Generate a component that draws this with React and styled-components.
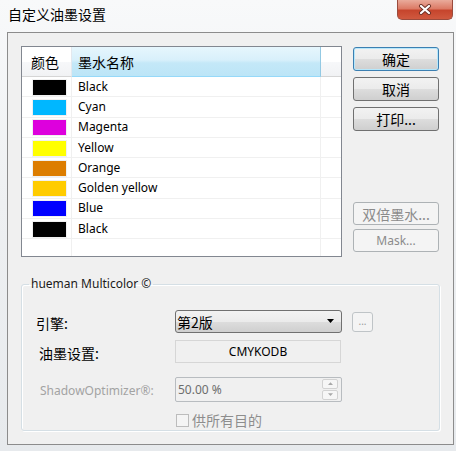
import React from 'react';
import styled, { createGlobalStyle, css } from 'styled-components';

const GlobalStyle = createGlobalStyle`
  html, body {
    margin: 0;
    padding: 0;
  }
  body {
    font-family: "Noto Sans", "Noto Sans CJK SC", sans-serif;
    font-size: 12px;
    color: #000;
    background: #fff;
  }
`

const cjk = css`
  font-family: "Noto Sans CJK SC", "Noto Sans", sans-serif;
  font-size: 14px;
`

const Window = styled.div`
  width: 456px;
  height: 451px;
  box-sizing: border-box;
  display: flex;
  flex-direction: column;
  overflow: hidden;
  background: linear-gradient(180deg, #f8f9fa 0%, #eef0f2 45%, #e7eaed 100%);
`

const TitleBar = styled.div`
  height: 32px;
  flex: none;
  display: flex;
  align-items: flex-start;
  justify-content: space-between;
  padding: 0 3px 0 8px;
`

const Title = styled.div`
  ${cjk};
  margin-top: 5px;
  line-height: 18px;
`

const CloseButton = styled.div`
  width: 56px;
  height: 20px;
  box-sizing: border-box;
  border: 1px solid #9a4b3d;
  border-top: none;
  border-radius: 0 0 5px 5px;
  background: linear-gradient(180deg, #e9ab9b 0%, #dc7b66 45%, #c6452d 55%, #d0593f 100%);
  display: flex;
  align-items: center;
  justify-content: center;
`

const Client = styled.div`
  flex: 1;
  margin: 0 2px 6px 7px;
  border: 1px solid #8c8c8c;
  background: #f0f0f0;
  padding: 13px 12px 0 13px;
  display: flex;
  flex-direction: column;
`

const TopSection = styled.div`
  display: flex;
  align-items: flex-start;
`

const InkList = styled.div`
  width: 321px;
  height: 211px;
  box-sizing: border-box;
  border: 1px solid #828790;
  background: #fff;
  display: flex;
  flex-direction: column;
`

const HeaderRow = styled.div`
  height: 30px;
  flex: none;
  display: flex;
`

const HeaderCell = styled.div`
  ${cjk};
  box-sizing: border-box;
  display: flex;
  align-items: center;
  padding-left: ${p => p.$pad || 0}px;
  width: ${p => (p.$w ? `${p.$w}px` : 'auto')};
  flex: ${p => (p.$w ? 'none' : '1')};
  border-bottom: 1px solid #d5d5d5;
  border-right: 1px solid #e3e8ee;
  background: linear-gradient(180deg, #ffffff 0%, #ffffff 50%, #f7f8fa 51%, #f1f2f4 100%);
  ${p => p.$sorted && css`
    background: linear-gradient(180deg, #e6f6fd 0%, #d8f0fb 45%, #c4e8f8 55%, #bce5f7 100%);
    border-bottom-color: #96d9f9;
    border-right-color: #93c9e3;
  `}
  ${p => p.$last && css`border-right: none;`}
`

const Row = styled.div`
  height: 20.3px;
  box-sizing: border-box;
  flex: ${p => (p.$filler ? '1' : 'none')};
  display: flex;
  border-bottom: ${p => (p.$filler ? 'none' : '1px solid #f0f0f0')};
`

const Cell = styled.div`
  box-sizing: border-box;
  display: flex;
  align-items: center;
  padding-left: ${p => p.$pad || 0}px;
  width: ${p => (p.$w ? `${p.$w}px` : 'auto')};
  flex: ${p => (p.$w ? 'none' : '1')};
  border-right: ${p => (p.$last ? 'none' : '1px solid #f0f0f0')};
  line-height: 16px;
`

const Swatch = styled.div`
  width: 33px;
  height: 15px;
  margin-top: 1px;
  box-sizing: border-box;
  background: ${p => p.$color};
  box-shadow: 0 0 0 1px rgba(0, 0, 0, 0.06);
`

const ButtonColumn = styled.div`
  margin-left: 11px;
  margin-top: 1px;
  height: 205px;
  display: flex;
  flex-direction: column;
  justify-content: space-between;
`

const ButtonStack = styled.div`
  display: flex;
  flex-direction: column;
  gap: ${p => p.$gap}px;
`

const Button = styled.button`
  ${cjk};
  width: 86px;
  height: ${p => p.$h || 24}px;
  box-sizing: border-box;
  padding: 0;
  line-height: 1;
  color: #000;
  border: 1px solid #707070;
  border-radius: 3px;
  background: linear-gradient(180deg, #f2f2f2 0%, #ebebeb 50%, #dddddd 51%, #cfcfcf 100%);
  ${p => p.$default && css`
    border-color: #3c7fb1;
    box-shadow: inset 0 0 0 1px #b6e7fb;
  `}
  ${p => p.$latin && css`
    font-family: "Noto Sans", sans-serif;
    font-size: 12px;
  `}
  &:disabled {
    color: #8b8b8b;
    border-color: #adb2b5;
    background: #f4f4f4;
  }
`

const GroupBox = styled.fieldset`
  margin: 19px 0 0 0;
  width: 419px;
  box-sizing: border-box;
  border: 1px solid #d5dfe5;
  border-radius: 3px;
  box-shadow: inset 1px 1px 0 #fff, 1px 1px 0 #fff;
  padding: 18px 0 7px 14px;
`

const Legend = styled.legend`
  margin-left: -7px;
  padding: 0 2px;
  line-height: 16px;
  color: #1a1a1a;
`

const FieldRow = styled.div`
  display: grid;
  grid-template-columns: 139px auto auto;
  justify-content: start;
  align-items: center;
  height: ${p => p.$h}px;
  margin-top: ${p => p.$top || 0}px;
`

const Label = styled.div`
  padding-left: ${p => p.$indent || 0}px;
  padding-top: 2px;
  ${p => (p.$latin ? css`font-size: 12px;` : cjk)};
  color: ${p => (p.$dim ? '#a3a3a3' : '#000')};
`

const Combo = styled.div`
  ${cjk};
  width: 167px;
  height: 23px;
  box-sizing: border-box;
  border: 1px solid #707070;
  border-radius: 3px;
  background: linear-gradient(180deg, #f2f2f2 0%, #ebebeb 50%, #dddddd 51%, #cfcfcf 100%);
  display: flex;
  align-items: center;
  justify-content: space-between;
  padding: 0 7px 0 1px;
`

const SmallButton = styled.div`
  margin-left: 10px;
  width: 21px;
  height: 20px;
  box-sizing: border-box;
  border: 1px solid #bfc4c7;
  border-radius: 3px;
  background: #f4f4f4;
  color: #9a9a9a;
  font-size: 10px;
  display: flex;
  align-items: center;
  justify-content: center;
  line-height: 1;
  padding-bottom: 2px;
`

const ReadField = styled.div`
  width: 166px;
  height: 23px;
  box-sizing: border-box;
  border: 1px solid #d6d6d6;
  background: #f0f0f0;
  display: flex;
  align-items: center;
  justify-content: center;
`

const SpinBox = styled.div`
  width: 167px;
  height: 25px;
  box-sizing: border-box;
  border: 1px solid #b8bcc0;
  border-radius: 2px;
  background: #f0f0f0;
  color: #6d6d6d;
  display: flex;
  align-items: center;
  justify-content: space-between;
  padding: 0 3px 0 2px;
`

const SpinArrows = styled.div`
  width: 16px;
  height: 21px;
  display: flex;
  flex-direction: column;
  gap: 1px;
`

const SpinArrow = styled.div`
  flex: 1;
  box-sizing: border-box;
  border: 1px solid #d2d2d2;
  border-radius: 2px;
  background: #f6f6f6;
  display: flex;
  align-items: center;
  justify-content: center;
`

const CheckWrap = styled.label`
  display: flex;
  align-items: center;
  gap: 3px;
  ${cjk};
  color: #8d8d8d;
  margin-left: 1px;
`

const CheckBox = styled.span`
  width: 13px;
  height: 13px;
  box-sizing: border-box;
  border: 1px solid #bcbcbc;
  background: #f4f4f4;
`

const inks = [
  { color: '#000000', name: 'Black' },
  { color: '#00b7ff', name: 'Cyan' },
  { color: '#dd00dd', name: 'Magenta' },
  { color: '#ffff00', name: 'Yellow' },
  { color: '#dc7d00', name: 'Orange' },
  { color: '#ffcc00', name: 'Golden yellow' },
  { color: '#0000ff', name: 'Blue' },
  { color: '#000000', name: 'Black' },
];

const CloseIcon = () => (
  <svg width="14" height="11" viewBox="0 0 14 11">
    <path d="M3 2 L11 9 M11 2 L3 9" stroke="#6b3026" strokeWidth="4" strokeLinecap="round" />
    <path d="M3 2 L11 9 M11 2 L3 9" stroke="#ffffff" strokeWidth="2.2" strokeLinecap="round" />
  </svg>
);

const Triangle = ({ dir = 'down', size = 7, color = '#000' }) => (
  <svg width={size} height={size / 2 + 1} viewBox="0 0 8 5">
    {dir === 'down'
      ? <path d="M0 0 L8 0 L4 4.5 Z" fill={color} />
      : <path d="M0 4.5 L8 4.5 L4 0 Z" fill={color} />}
  </svg>
);

function App() {
  return (
    <Window>
      <GlobalStyle />
      <TitleBar>
        <Title>自定义油墨设置</Title>
        <CloseButton><CloseIcon /></CloseButton>
      </TitleBar>
      <Client>
        <TopSection>
          <InkList>
            <HeaderRow>
              <HeaderCell $w={50} $pad={9}>颜色</HeaderCell>
              <HeaderCell $w={249} $pad={6} $sorted>墨水名称</HeaderCell>
              <HeaderCell $last />
            </HeaderRow>
            {inks.map((ink, i) => (
              <Row key={i}>
                <Cell $w={50} $pad={11}><Swatch $color={ink.color} /></Cell>
                <Cell $w={249} $pad={6}>{ink.name}</Cell>
                <Cell $last />
              </Row>
            ))}
            <Row $filler>
              <Cell $w={50} />
              <Cell $w={249} />
              <Cell $last />
            </Row>
          </InkList>
          <ButtonColumn>
            <ButtonStack $gap={6}>
              <Button $default>确定</Button>
              <Button>取消</Button>
              <Button>打印...</Button>
            </ButtonStack>
            <ButtonStack $gap={4}>
              <Button $h={23} disabled>双倍墨水...</Button>
              <Button $h={23} $latin disabled>Mask...</Button>
            </ButtonStack>
          </ButtonColumn>
        </TopSection>
        <GroupBox>
          <Legend>hueman Multicolor ©</Legend>
          <FieldRow $h={23}>
            <Label>引擎:</Label>
            <Combo>
              <span>第2版</span>
              <Triangle />
            </Combo>
            <SmallButton>...</SmallButton>
          </FieldRow>
          <FieldRow $h={23} $top={7}>
            <Label $indent={3}>油墨设置:</Label>
            <ReadField>CMYKODB</ReadField>
          </FieldRow>
          <FieldRow $h={25} $top={14}>
            <Label $indent={4} $latin $dim>ShadowOptimizer®:</Label>
            <SpinBox>
              <span>50.00 %</span>
              <SpinArrows>
                <SpinArrow><Triangle dir="up" size={5} color="#a8a8a8" /></SpinArrow>
                <SpinArrow><Triangle size={5} color="#a8a8a8" /></SpinArrow>
              </SpinArrows>
            </SpinBox>
          </FieldRow>
          <FieldRow $h={13} $top={8}>
            <span />
            <CheckWrap>
              <CheckBox />
              供所有目的
            </CheckWrap>
          </FieldRow>
        </GroupBox>
      </Client>
    </Window>
  );
}

export default App;
